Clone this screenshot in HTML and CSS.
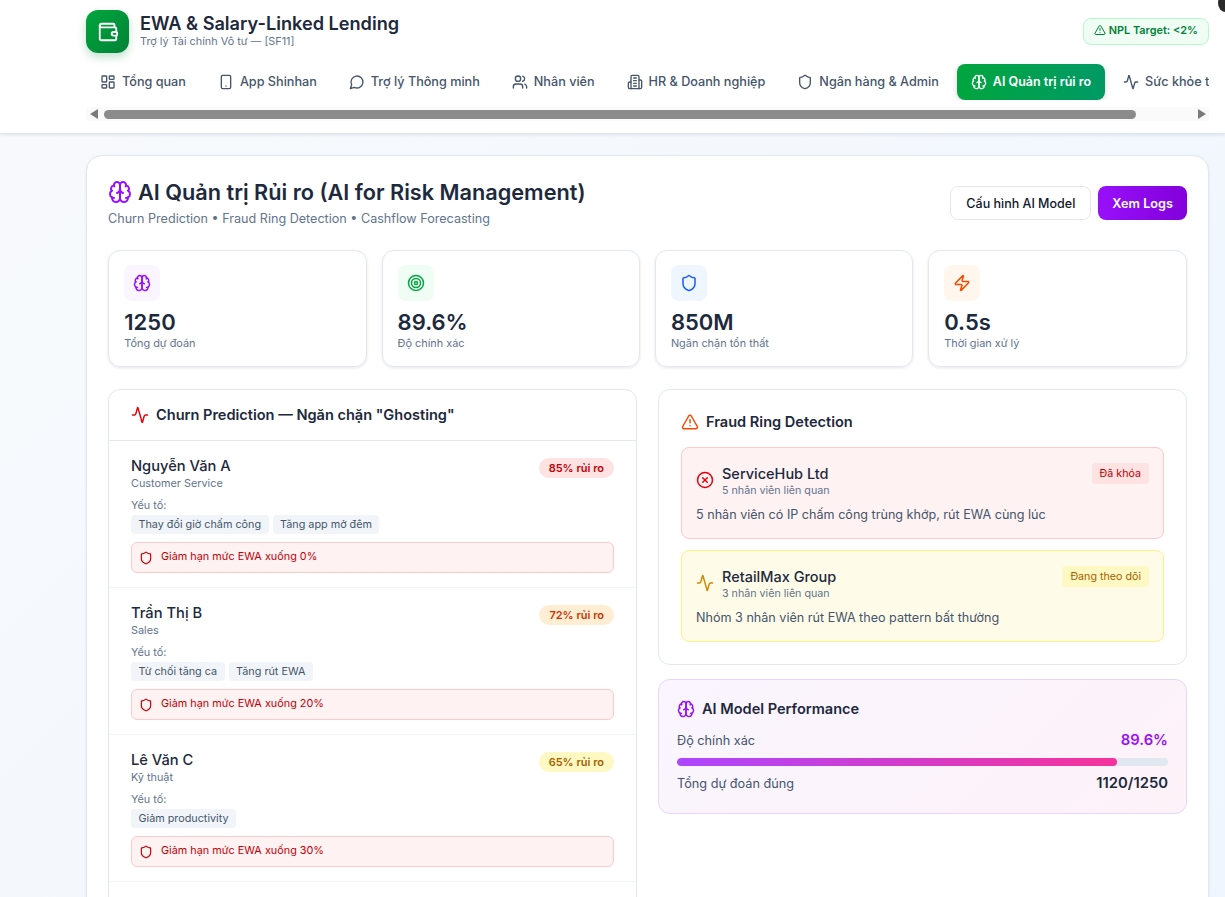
FILE: index.html
```html
<!DOCTYPE html>
<html lang="vi">
<head>
<meta charset="utf-8">
<title>EWA &amp; Salary-Linked Lending</title>
<link rel="stylesheet" href="styles.css">
</head>
<body>
<svg class="sprite" xmlns="http://www.w3.org/2000/svg">
  <symbol id="i-wallet" viewBox="0 0 24 24"><path d="M19 7V4a1 1 0 0 0-1-1H5a2 2 0 0 0 0 4h15a1 1 0 0 1 1 1v4h-3a2 2 0 0 0 0 4h3a1 1 0 0 0 1-1v-2a1 1 0 0 0-1-1"/><path d="M3 5v14a2 2 0 0 0 2 2h15a1 1 0 0 0 1-1v-4"/></symbol>
  <symbol id="i-dash" viewBox="0 0 24 24"><rect x="3" y="3" width="7" height="9" rx="1"/><rect x="14" y="3" width="7" height="5" rx="1"/><rect x="14" y="12" width="7" height="9" rx="1"/><rect x="3" y="16" width="7" height="5" rx="1"/></symbol>
  <symbol id="i-phone" viewBox="0 0 24 24"><rect x="5" y="2" width="14" height="20" rx="2"/><path d="M12 18h.01"/></symbol>
  <symbol id="i-msg" viewBox="0 0 24 24"><path d="M7.9 20A9 9 0 1 0 4 16.1L2 22Z"/></symbol>
  <symbol id="i-users" viewBox="0 0 24 24"><path d="M16 21v-2a4 4 0 0 0-4-4H6a4 4 0 0 0-4 4v2"/><circle cx="9" cy="7" r="4"/><path d="M22 21v-2a4 4 0 0 0-3-3.87"/><path d="M16 3.13a4 4 0 0 1 0 7.75"/></symbol>
  <symbol id="i-building" viewBox="0 0 24 24"><path d="M6 22V4a2 2 0 0 1 2-2h8a2 2 0 0 1 2 2v18Z"/><path d="M6 12H4a2 2 0 0 0-2 2v6a2 2 0 0 0 2 2h2"/><path d="M18 9h2a2 2 0 0 1 2 2v9a2 2 0 0 1-2 2h-2"/><path d="M10 6h4"/><path d="M10 10h4"/><path d="M10 14h4"/><path d="M10 18h4"/></symbol>
  <symbol id="i-shield" viewBox="0 0 24 24"><path d="M20 13c0 5-3.5 7.5-7.66 8.95a1 1 0 0 1-.67-.01C7.5 20.5 4 18 4 13V6a1 1 0 0 1 1-1c2 0 4.5-1.2 6.24-2.72a1.17 1.17 0 0 1 1.52 0C14.51 3.81 17 5 19 5a1 1 0 0 1 1 1z"/></symbol>
  <symbol id="i-brain" viewBox="0 0 24 24"><path d="M12 5a3 3 0 1 0-5.997.125 4 4 0 0 0-2.526 5.77 4 4 0 0 0 .556 6.588A4 4 0 1 0 12 18Z"/><path d="M12 5a3 3 0 1 1 5.997.125 4 4 0 0 1 2.526 5.77 4 4 0 0 1-.556 6.588A4 4 0 1 1 12 18Z"/><path d="M15 13a4.5 4.5 0 0 1-3-4 4.5 4.5 0 0 1-3 4"/><path d="M17.599 6.5a3 3 0 0 0 .399-1.375"/><path d="M6.003 5.125A3 3 0 0 0 6.401 6.5"/><path d="M3.477 10.896a4 4 0 0 1 .585-.396"/><path d="M19.938 10.5a4 4 0 0 1 .585.396"/><path d="M6 18a4 4 0 0 1-1.967-.516"/><path d="M19.967 17.484A4 4 0 0 1 18 18"/></symbol>
  <symbol id="i-activity" viewBox="0 0 24 24"><path d="M22 12h-2.48a2 2 0 0 0-1.93 1.46l-2.35 8.36a.25.25 0 0 1-.48 0L9.24 2.18a.25.25 0 0 0-.48 0l-2.35 8.36A2 2 0 0 1 4.49 12H2"/></symbol>
  <symbol id="i-alert" viewBox="0 0 24 24"><path d="m21.73 18-8-14a2 2 0 0 0-3.48 0l-8 14A2 2 0 0 0 4 21h16a2 2 0 0 0 1.73-3"/><path d="M12 9v4"/><path d="M12 17h.01"/></symbol>
  <symbol id="i-target" viewBox="0 0 24 24"><circle cx="12" cy="12" r="10"/><circle cx="12" cy="12" r="6"/><circle cx="12" cy="12" r="2"/></symbol>
  <symbol id="i-zap" viewBox="0 0 24 24"><path d="M4 14a1 1 0 0 1-.78-1.63l9.9-10.2a.5.5 0 0 1 .86.46l-1.92 6.02A1 1 0 0 0 13 10h7a1 1 0 0 1 .78 1.63l-9.9 10.2a.5.5 0 0 1-.86-.46l1.92-6.02A1 1 0 0 0 11 14z"/></symbol>
  <symbol id="i-x" viewBox="0 0 24 24"><circle cx="12" cy="12" r="10"/><path d="m15 9-6 6"/><path d="m9 9 6 6"/></symbol>
</svg>

<span class="corner-blob"></span>

<header class="topbar">
  <div class="brand-row">
    <div class="brand">
      <div class="logo"><svg class="ic ic-22"><use href="#i-wallet"/></svg></div>
      <div class="brand-text">
        <h1 class="brand-title">EWA &amp; Salary-Linked Lending</h1>
        <p class="brand-sub">Trợ lý Tài chính Vô tư — [SF11]</p>
      </div>
    </div>
    <div class="npl"><svg class="ic ic-12"><use href="#i-alert"/></svg>NPL Target: &lt;2%</div>
  </div>
  <nav class="tabs">
    <a class="tab"><svg class="ic ic-16"><use href="#i-dash"/></svg>Tổng quan</a>
    <a class="tab"><svg class="ic ic-16"><use href="#i-phone"/></svg>App Shinhan</a>
    <a class="tab"><svg class="ic ic-16"><use href="#i-msg"/></svg>Trợ lý Thông minh</a>
    <a class="tab"><svg class="ic ic-16"><use href="#i-users"/></svg>Nhân viên</a>
    <a class="tab"><svg class="ic ic-16"><use href="#i-building"/></svg>HR &amp; Doanh nghiệp</a>
    <a class="tab"><svg class="ic ic-16"><use href="#i-shield"/></svg>Ngân hàng &amp; Admin</a>
    <a class="tab tab-active"><svg class="ic ic-16"><use href="#i-brain"/></svg>AI Quản trị rủi ro</a>
    <a class="tab"><svg class="ic ic-16"><use href="#i-activity"/></svg>Sức khỏe tài chính</a>
  </nav>
  <div class="hscroll">
    <span class="arrow arrow-left"></span>
    <div class="hscroll-track"><span class="hscroll-thumb"></span></div>
    <span class="arrow arrow-right"></span>
  </div>
</header>

<main class="page">
  <section class="panel">
    <div class="panel-head">
      <div>
        <h2 class="panel-title"><svg class="ic ic-24 c-purple"><use href="#i-brain"/></svg>AI Quản trị Rủi ro (AI for Risk Management)</h2>
        <p class="panel-sub">Churn Prediction • Fraud Ring Detection • Cashflow Forecasting</p>
      </div>
      <div class="actions">
        <button class="btn btn-ghost">Cấu hình AI Model</button>
        <button class="btn btn-primary">Xem Logs</button>
      </div>
    </div>

    <div class="stats">
      <div class="stat">
        <div class="stat-icon bg-purple"><svg class="ic ic-18 c-purple"><use href="#i-brain"/></svg></div>
        <div class="stat-value">1250</div>
        <div class="stat-label">Tổng dự đoán</div>
      </div>
      <div class="stat">
        <div class="stat-icon bg-green"><svg class="ic ic-18 c-green"><use href="#i-target"/></svg></div>
        <div class="stat-value">89.6%</div>
        <div class="stat-label">Độ chính xác</div>
      </div>
      <div class="stat">
        <div class="stat-icon bg-blue"><svg class="ic ic-18 c-blue"><use href="#i-shield"/></svg></div>
        <div class="stat-value">850M</div>
        <div class="stat-label">Ngăn chặn tổn thất</div>
      </div>
      <div class="stat">
        <div class="stat-icon bg-orange"><svg class="ic ic-18 c-orange"><use href="#i-zap"/></svg></div>
        <div class="stat-value">0.5s</div>
        <div class="stat-label">Thời gian xử lý</div>
      </div>
    </div>

    <div class="columns">
      <div class="card churn">
        <h3 class="churn-head"><svg class="ic ic-18 c-red"><use href="#i-activity"/></svg>Churn Prediction — Ngăn chặn "Ghosting"</h3>

        <article class="person">
          <div class="person-top">
            <div>
              <div class="person-name">Nguyễn Văn A</div>
              <div class="person-role">Customer Service</div>
            </div>
            <span class="pill pill-red">85% rủi ro</span>
          </div>
          <div class="factor-label">Yếu tố:</div>
          <div class="factors"><span class="factor">Thay đổi giờ chấm công</span><span class="factor">Tăng app mở đêm</span></div>
          <div class="action"><svg class="ic ic-14"><use href="#i-shield"/></svg>Giảm hạn mức EWA xuống 0%</div>
        </article>

        <article class="person">
          <div class="person-top">
            <div>
              <div class="person-name">Trần Thị B</div>
              <div class="person-role">Sales</div>
            </div>
            <span class="pill pill-orange">72% rủi ro</span>
          </div>
          <div class="factor-label">Yếu tố:</div>
          <div class="factors"><span class="factor">Từ chối tăng ca</span><span class="factor">Tăng rút EWA</span></div>
          <div class="action"><svg class="ic ic-14"><use href="#i-shield"/></svg>Giảm hạn mức EWA xuống 20%</div>
        </article>

        <article class="person">
          <div class="person-top">
            <div>
              <div class="person-name">Lê Văn C</div>
              <div class="person-role">Kỹ thuật</div>
            </div>
            <span class="pill pill-yellow">65% rủi ro</span>
          </div>
          <div class="factor-label">Yếu tố:</div>
          <div class="factors"><span class="factor">Giảm productivity</span></div>
          <div class="action"><svg class="ic ic-14"><use href="#i-shield"/></svg>Giảm hạn mức EWA xuống 30%</div>
        </article>
        <div class="person-rest"></div>
      </div>

      <div class="side">
        <div class="card fraud">
          <h3 class="side-title"><svg class="ic ic-18 c-orange"><use href="#i-alert"/></svg>Fraud Ring Detection</h3>
          <div class="ring ring-red">
            <div class="ring-top">
              <svg class="ic ic-18 c-red"><use href="#i-x"/></svg>
              <div class="ring-id">
                <div class="ring-name">ServiceHub Ltd</div>
                <div class="ring-count">5 nhân viên liên quan</div>
              </div>
              <span class="tag tag-red">Đã khóa</span>
            </div>
            <p class="ring-desc">5 nhân viên có IP chấm công trùng khớp, rút EWA cùng lúc</p>
          </div>
          <div class="ring ring-yellow">
            <div class="ring-top">
              <svg class="ic ic-18 c-yellow"><use href="#i-activity"/></svg>
              <div class="ring-id">
                <div class="ring-name">RetailMax Group</div>
                <div class="ring-count">3 nhân viên liên quan</div>
              </div>
              <span class="tag tag-yellow">Đang theo dõi</span>
            </div>
            <p class="ring-desc">Nhóm 3 nhân viên rút EWA theo pattern bất thường</p>
          </div>
        </div>

        <div class="card perf">
          <h3 class="perf-title"><svg class="ic ic-18 c-purple"><use href="#i-brain"/></svg>AI Model Performance</h3>
          <div class="perf-row"><span>Độ chính xác</span><strong class="perf-accent">89.6%</strong></div>
          <div class="bar"><div class="bar-fill"></div></div>
          <div class="perf-row perf-row-last"><span>Tổng dự đoán đúng</span><strong>1120/1250</strong></div>
        </div>
      </div>
    </div>
  </section>
</main>
</body>
</html>
```

FILE: styles.css
```css
* { box-sizing: border-box; }
html, body { height: 100%; }
body {
  margin: 0;
  height: 897px;
  overflow: hidden;
  font-family: Inter, "Noto Sans", sans-serif;
  color: #1d293d;
  background: linear-gradient(135deg, #f8fafc 0%, #eff6ff 100%);
}
h1, h2, h3, p { margin: 0; }
.sprite { display: none; }

.ic { flex: none; fill: none; stroke: currentColor; stroke-width: 2; stroke-linecap: round; stroke-linejoin: round; }
.ic-12 { width: 12px; height: 12px; }
.ic-14 { width: 14px; height: 14px; }
.ic-16 { width: 16px; height: 16px; }
.ic-18 { width: 18px; height: 18px; }
.ic-22 { width: 22px; height: 22px; }
.ic-24 { width: 24px; height: 24px; }
.c-purple { color: #9810fa; }
.c-green { color: #00a63e; }
.c-blue { color: #155dfc; }
.c-orange { color: #f54900; }
.c-red { color: #e7000b; }
.c-yellow { color: #d08700; }
.bg-purple { background: #faf5ff; }
.bg-green { background: #f0fdf4; }
.bg-blue { background: #eff6ff; }
.bg-orange { background: #fff7ed; }

.corner-blob {
  position: absolute;
  top: -6px;
  right: -7px;
  width: 14px;
  height: 18px;
  border-radius: 50%;
  background: #2a2a2a;
}

.topbar {
  height: 134px;
  padding: 10px 16px 0 86px;
  background: #fff;
  border-bottom: 1px solid #e2e8f0;
  box-shadow: 0 1px 3px rgba(15, 23, 42, .1);
}
.brand-row { display: flex; align-items: center; justify-content: space-between; height: 43px; }
.brand { display: flex; align-items: center; gap: 11px; }
.logo {
  width: 43px;
  height: 43px;
  border-radius: 12px;
  display: flex;
  align-items: center;
  justify-content: center;
  color: #fff;
  background: linear-gradient(135deg, #00a63e, #008236);
  box-shadow: 0 4px 8px rgba(0, 130, 54, .25);
}
.brand-text { margin-bottom: 5px; }
.brand-title { font-size: 18.15px; line-height: 23px; font-weight: 600; color: #1d293d; }
.brand-sub { font-size: 10.85px; line-height: 12px; color: #62748e; }
.npl {
  display: flex;
  align-items: center;
  gap: 3px;
  height: 27px;
  padding: 0 10px 4px 10px;
  font-size: 10.9px;
  font-weight: 600;
  color: #008236;
  background: #f0fdf4;
  border: 1px solid #b9f8cf;
  border-radius: 8px;
}

.tabs {
  display: flex;
  gap: 4px;
  height: 36px;
  margin-top: 11px;
  overflow: hidden;
}
.tab {
  flex: none;
  display: flex;
  align-items: center;
  gap: 6px;
  padding: 0 14px 1px;
  font-size: 12.65px;
  font-weight: 500;
  color: #45556c;
  border-radius: 8px;
  white-space: nowrap;
}
.tab-active {
  color: #fff;
  font-size: 12.5px;
  font-weight: 600;
  background: linear-gradient(90deg, #00a63e, #009966);
  box-shadow: 0 2px 6px rgba(0, 0, 0, .15);
}

.hscroll {
  display: flex;
  align-items: center;
  height: 14px;
  margin-top: 7px;
  background: #fafafa;
}
.hscroll-track { flex: 1; height: 9px; margin: 0 6px; }
.hscroll-thumb { display: block; width: 1032px; height: 9px; border-radius: 5px; background: #8b8b8b; }
.arrow { flex: none; width: 0; height: 0; border-top: 5px solid transparent; border-bottom: 5px solid transparent; }
.arrow-left { margin-left: 4px; border-right: 8px solid #7a7a7a; }
.arrow-right { margin-right: 3px; border-left: 8px solid #7a7a7a; }

.page { padding: 21px 16px 0 86px; }
.panel {
  padding: 22px 21px 0;
  background: #fff;
  border: 1px solid #e2e8f0;
  border-radius: 16px;
  box-shadow: 0 1px 3px rgba(15, 23, 42, .08);
}
.panel-head { display: flex; align-items: center; justify-content: space-between; }
.panel-title { display: flex; align-items: center; gap: 6px; font-size: 21.7px; line-height: 28px; font-weight: 600; color: #1d293d; }
.panel-sub { margin-top: 4px; font-size: 12.6px; line-height: 17px; color: #62748e; }
.actions { display: flex; gap: 7px; margin-top: 1px; }
.btn {
  height: 34px;
  padding: 0 15px;
  font: 500 12.5px Inter, "Noto Sans", sans-serif;
  border-radius: 8px;
}
.btn-ghost { color: #0f172b; background: #fff; border: 1px solid #e2e8f0; }
.btn-primary { padding: 0 14px; color: #fff; font-size: 12.7px; font-weight: 600; border: 0; background: linear-gradient(90deg, #9810fa, #8200db); }

.stats { display: grid; grid-template-columns: repeat(4, 1fr); gap: 15px; margin-top: 23px; padding: 0 .5px 0 .3px; }
.stat {
  height: 117px;
  padding: 14px 15px;
  border: 1px solid #e2e8f0;
  border-radius: 12px;
  box-shadow: 0 1px 3px rgba(15, 23, 42, .1);
}
.stat-icon { width: 36px; height: 36px; border-radius: 8px; display: flex; align-items: center; justify-content: center; }
.stat-value { margin-top: 7px; font-size: 22px; line-height: 28px; font-weight: 600; color: #1d293d; }
.stat-label { font-size: 10.9px; line-height: 14px; color: #62748e; }

.columns { display: grid; grid-template-columns: 1fr 1fr; gap: 21px; margin-top: 22px; align-items: start; }
.card { background: #fff; border: 1px solid #e2e8f0; border-radius: 12px; }

.churn-head {
  display: flex;
  align-items: center;
  gap: 7px;
  height: 51px;
  padding: 0 22px;
  font-size: 14.55px;
  font-weight: 600;
  border-bottom: 1px solid #e2e8f0;
}
.person { height: 147px; padding: 15px 22px 0; border-bottom: 1px solid #f1f5f9; }
.person-rest { height: 40px; }
.person-top { display: flex; justify-content: space-between; align-items: flex-start; }
.person-name { font-size: 14.7px; line-height: 20px; font-weight: 500; }
.person-role { font-size: 10.85px; line-height: 14px; color: #62748e; }
.pill { margin-top: 2px; padding: 0 10px; height: 20px; display: flex; align-items: center; border-radius: 10px; font-size: 11px; font-weight: 600; }
.pill-red { color: #c10007; background: #ffe2e2; }
.pill-orange { color: #ca3500; background: #ffedd4; }
.pill-yellow { color: #a65f00; background: #fef9c2; }
.factor-label { margin-top: 8px; font-size: 10.85px; line-height: 14px; color: #62748e; }
.factors { display: flex; gap: 4px; margin-top: 3px; }
.factor { height: 19px; padding: 0 7.5px 1px; display: flex; align-items: center; font-size: 10.8px; color: #45556c; background: #f1f5f9; border-radius: 4px; }
.action {
  display: flex;
  align-items: center;
  gap: 8px;
  height: 31px;
  margin-top: 8px;
  padding: 0 7px 3px;
  font-size: 10.85px;
  color: #c10007;
  background: #fef2f2;
  border: 1px solid #ffc9c9;
  border-radius: 6px;
}
.action .ic { margin-top: 3px; }

.side { display: flex; flex-direction: column; gap: 14px; }
.fraud { height: 276px; padding: 22px; }
.side-title { display: flex; align-items: center; gap: 7px; height: 20px; font-size: 14.55px; font-weight: 600; margin-bottom: 15px; }
.ring { height: 92px; padding: 15px 14px; border-radius: 8px; border: 1px solid; }
.ring + .ring { margin-top: 11px; }
.ring-red { background: #fef2f2; border-color: #ffc9c9; }
.ring-yellow { background: #fefce8; border-color: #fff085; }
.ring-top { display: flex; align-items: center; gap: 8px; }
.ring-id { flex: 1; margin-top: 1px; }
.ring-name { font-size: 14.5px; line-height: 20px; font-weight: 500; }
.ring-count { font-size: 10.7px; line-height: 13px; color: #62748e; }
.tag { align-self: flex-start; height: 21px; padding: 0 8px; display: flex; align-items: center; font-size: 10.7px; border-radius: 4px; }
.tag-red { color: #c10007; background: #ffe2e2; }
.tag-yellow { color: #a65f00; background: #fef9c2; }
.ring-desc { margin-top: 9px; font-size: 12.6px; line-height: 17px; color: #45556c; }

.perf { height: 135px; padding: 18px; border-color: #e9d4ff; background: linear-gradient(135deg, #faf5ff, #fdf2f8); }
.perf-title { display: flex; align-items: center; gap: 7px; font-size: 14.55px; line-height: 22px; font-weight: 600; margin-bottom: 9px; }
.perf-row { display: flex; justify-content: space-between; align-items: center; height: 22px; font-size: 12.7px; color: #45556c; }
.perf-row strong { font-size: 14.8px; font-weight: 600; color: #1d293d; }
.perf-row .perf-accent { color: #9810fa; }
.perf-row-last { margin-top: 6px; }
.bar { height: 8px; margin-top: 7px; border-radius: 4px; background: #e2e8f0; overflow: hidden; }
.bar-fill { width: 89.6%; height: 100%; border-radius: 4px; background: linear-gradient(90deg, #ad46ff, #f6339a); }
```
